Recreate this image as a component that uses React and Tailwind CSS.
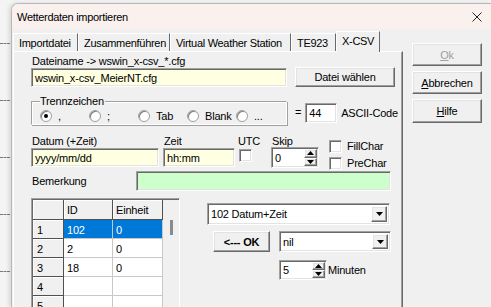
import React from 'react'

const sunken = 'border border-t-[#a0a0a0] border-l-[#a0a0a0] border-b-white border-r-white shadow-[inset_1px_1px_0_#696969,inset_-1px_-1px_0_#e3e3e3]'
const raised = 'border border-t-white border-l-white border-b-[#696969] border-r-[#696969] shadow-[inset_-1px_-1px_0_#a0a0a0,inset_1px_1px_0_#e3e3e3]'

function Arrow({ up }) {
    return (
        <svg width="7" height="4" viewBox="0 0 7 4">
            <path d={up ? 'M0 4 L3.5 0 L7 4 Z' : 'M0 0 L7 0 L3.5 4 Z'} fill="#000" />
        </svg>
    )
}

function Radio({ checked }) {
    return (
        <span className="w-[12px] h-[12px] shrink-0 rounded-full bg-white border border-[#a0a0a0] shadow-[inset_1px_1px_0_#808080] flex items-center justify-center">
            {checked && <span className="w-[4px] h-[4px] rounded-full bg-black" />}
        </span>
    )
}

function Check() {
    return <span className={`block w-[13px] h-[13px] shrink-0 bg-white ${sunken}`} />
}

function Spin({ value, className }) {
    return (
        <div className={`flex items-center bg-white ${sunken} ${className}`}>
            <span className="flex-1 pl-[3px]">{value}</span>
            <div className="flex flex-col w-[14px] h-full py-[1px] pr-[1px]">
                <div className={`flex-1 flex items-center justify-center bg-[#f0f0f0] ${raised}`}><Arrow up /></div>
                <div className={`flex-1 flex items-center justify-center bg-[#f0f0f0] ${raised}`}><Arrow /></div>
            </div>
        </div>
    )
}

function Combo({ value, className }) {
    return (
        <div className={`flex items-center bg-white ${sunken} ${className}`}>
            <span className="flex-1 pl-[3px]">{value}</span>
            <div className={`w-[16px] h-[calc(100%-4px)] mr-[2px] flex items-center justify-center bg-[#f0f0f0] ${raised}`}><Arrow /></div>
        </div>
    )
}

function Button({ children, className }) {
    return (
        <div className={`flex items-center justify-center bg-[#f0f0f0] ${raised} ${className}`}>{children}</div>
    )
}

const tabs = [
    ['Importdatei', 'w-[65px]'],
    ['Zusammenführen', 'w-[92px]'],
    ['Virtual Weather Station', 'w-[121px]'],
    ['TE923', 'w-[45px]'],
]

const rows = [
    ['1', '102', '0', true],
    ['2', '2', '0'],
    ['3', '18', '0'],
    ['4', '', ''],
    ['5', '', ''],
]

export default function App() {
    return (
        <div className="w-[491px] h-[307px] overflow-hidden flex bg-[#f4f4f4] font-['Liberation_Sans',Arial,sans-serif] text-[11px] tracking-[-0.2px] leading-[14px] text-black whitespace-nowrap">
            {/* background behind the dialog */}
            <div className="w-[11px] shrink-0 flex flex-col pt-[43px] gap-[56px]">
                {[0, 1, 2, 3, 4].map((i) => (
                    <div key={i} className="w-[10px] h-0 border-t border-dashed border-[#7a7a7a]" />
                ))}
            </div>

            <div className="flex-1 mt-[3px] flex flex-col rounded-tl-[7px] border-l border-t border-[#b8b8b8] overflow-hidden shadow-[-2px_0_4px_rgba(0,0,0,0.12)]">
                <div className="h-[25px] shrink-0 bg-[#faf0ee] flex items-center justify-between pl-[5px] pr-[9px]">
                    <span className="text-[11px] tracking-[-0.3px]">Wetterdaten importieren</span>
                    <svg width="10" height="10" viewBox="0 0 10 10">
                        <path d="M0.5 0.5 L9.5 9.5 M9.5 0.5 L0.5 9.5" stroke="#222" strokeWidth="1" />
                    </svg>
                </div>

                <div className="flex-1 bg-[#f0f0f0] flex pl-[1px] pt-[2px]">
                    <div className="w-[390px] flex flex-col">
                        {/* tabs */}
                        <div className="h-[20px] flex items-end tracking-[-0.3px]">
                            {tabs.map(([t, w]) => (
                                <div key={t} className={`${w} h-[18px] border-t border-l border-t-white border-l-white border-r border-r-[#696969] flex items-center pl-[5px]`}>
                                    {t}
                                </div>
                            ))}
                            <div className="w-[44px] h-[21px] -mb-px z-10 bg-[#f0f0f0] border-t border-l border-t-white border-l-white border-r border-r-[#696969] flex items-center pl-[5px] pb-[3px]">
                                X-CSV
                            </div>
                        </div>

                        {/* panel */}
                        <div className="flex-1 border-t border-l border-t-white border-l-white border-r border-r-[#696969] shadow-[inset_-1px_0_0_#a0a0a0] pl-[17px]">
                            <div className="mt-[2px] h-[13px] pl-px">Dateiname -&gt; wswin_x-csv_*.cfg</div>
                            <div className="flex h-[20px]">
                                <div className={`w-[256px] h-[19px] mt-px bg-[#ffffe1] flex items-center pl-[3px] ${sunken}`}>wswin_x-csv_MeierNT.cfg</div>
                                <Button className="ml-[8px] w-[100px] h-[20px]">Datei wählen</Button>
                            </div>

                            <div className="flex mt-[9px] h-[29px]">
                                <div className="relative w-[256px] h-[24px] mt-[5px] border border-t-[#a0a0a0] border-l-[#a0a0a0] border-b-white border-r-white shadow-[inset_1px_1px_0_white,1px_1px_0_#a0a0a0]">
                                    <span className="absolute left-[8px] -top-[8px] bg-[#f0f0f0] pr-px">Trennzeichen</span>
                                    <div className="flex items-center pl-[8px] pt-[7px]">
                                        {[[',', true], [';'], ['Tab'], ['Blank'], ['...']].map(([l, c], i) => (
                                            <div key={i} className={`flex items-center gap-[6px] ${i === 4 ? '' : 'w-[49px]'}`}>
                                                <Radio checked={c} />
                                                <span>{l}</span>
                                            </div>
                                        ))}
                                    </div>
                                </div>
                                <span className="ml-[8px] mt-[9px]">=</span>
                                <div className={`ml-[4px] mt-[7px] w-[32px] h-[20px] bg-white flex items-center pl-[3px] ${sunken}`}>44</div>
                                <span className="ml-[4px] mt-[10px]">ASCII-Code</span>
                            </div>

                            <div className="flex mt-[8px] h-[35px]">
                                <div className="w-[128px] flex flex-col">
                                    <span className="h-[15px] pt-px pl-px">Datum (+Zeit)</span>
                                    <div className={`h-[19px] bg-[#ffffe1] flex items-center pl-[3px] ${sunken}`}>yyyy/mm/dd</div>
                                </div>
                                <div className="ml-[4px] w-[72px] flex flex-col">
                                    <span className="h-[15px] pt-px pl-px">Zeit</span>
                                    <div className={`h-[19px] bg-[#ffffe1] flex items-center pl-[3px] ${sunken}`}>hh:mm</div>
                                </div>
                                <div className="ml-[3px] w-[33px] flex flex-col">
                                    <span className="h-[16px] pt-px">UTC</span>
                                    <span className="ml-px"><Check /></span>
                                </div>
                                <div className="w-[48px] flex flex-col">
                                    <span className="h-[14px] pt-px pl-px">Skip</span>
                                    <Spin value="0" className="h-[21px]" />
                                </div>
                                <div className="ml-[10px] flex flex-col gap-[3px] pt-[6px]">
                                    <div className="flex items-center gap-[5px]"><Check /><span>FillChar</span></div>
                                    <div className="flex items-center gap-[5px]"><Check /><span>PreChar</span></div>
                                </div>
                            </div>

                            <div className="flex items-center mt-[3px] h-[20px]">
                                <span className="w-[105px] pl-px">Bemerkung</span>
                                <div className={`w-[255px] h-[20px] bg-[#ccffcc] ${sunken}`} />
                            </div>

                            <div className="flex mt-[7px]">
                                <div className="w-[149px] h-[120px] flex border border-t-[#a0a0a0] border-l-[#a0a0a0] border-r-white shadow-[inset_1px_1px_0_#696969] pt-px pl-px">
                                    <div className="w-[131px] flex flex-col">
                                        <div className="flex h-[20px]">
                                            <div className="w-[31px] bg-[#f0f0f0] border-r border-b border-r-[#505050] border-b-[#505050] shadow-[inset_1px_1px_0_white]" />
                                            <div className="w-[49px] bg-[#f0f0f0] border-r border-b border-r-[#505050] border-b-[#505050] shadow-[inset_1px_1px_0_white] pl-[3px] pt-[3px]">ID</div>
                                            <div className="w-[50px] bg-[#f0f0f0] border-r border-b border-r-[#505050] border-b-[#505050] shadow-[inset_1px_1px_0_white] pl-[3px] pt-[3px]">Einheit</div>
                                        </div>
                                        {rows.map(([n, id, e, sel]) => (
                                            <div key={n} className="flex h-[19px]">
                                                <div className="w-[31px] bg-[#f0f0f0] border-r border-b border-r-[#505050] border-b-[#505050] shadow-[inset_1px_1px_0_white] pl-[4px] pt-[3px]">{n}</div>
                                                <div className={`w-[49px] border-r border-b border-[#c8c8c8] pl-[3px] pt-[3px] ${sel ? 'bg-[#0078d7] text-white' : 'bg-white'}`}>{id}</div>
                                                <div className={`w-[50px] border-r border-b border-[#c8c8c8] pl-[3px] pt-[3px] ${sel ? 'bg-[#0078d7] text-white' : 'bg-white'}`}>{e}</div>
                                            </div>
                                        ))}
                                    </div>
                                    <div className="flex-1 bg-[#f0f0f0] flex justify-center pt-[20px]">
                                        <div className="w-[3px] h-[15px] bg-[#8a8a8a]" />
                                    </div>
                                </div>

                                <div className="ml-[27px] flex flex-col">
                                    <Combo value="102 Datum+Zeit" className="mt-[5px] w-[183px] h-[22px]" />
                                    <div className="flex mt-[6px]">
                                        <Button className="ml-[6px] w-[57px] h-[21px] font-bold">&lt;--- OK</Button>
                                        <Combo value="nil" className="ml-[9px] w-[112px] h-[21px]" />
                                    </div>
                                    <div className="flex items-center mt-[8px] ml-[72px]">
                                        <Spin value="5" className="w-[48px] h-[20px]" />
                                        <span className="ml-px">Minuten</span>
                                    </div>
                                </div>
                            </div>
                        </div>
                    </div>

                    {/* dialog buttons */}
                    <div className="ml-[9px] mt-[12px] flex flex-col gap-[5px]">
                        <Button className="w-[70px] h-[23px] text-[#a0a0a0]"><span className="underline">O</span>k</Button>
                        <Button className="w-[70px] h-[23px]"><span className="underline">A</span>bbrechen</Button>
                        <Button className="w-[70px] h-[24px]"><span className="underline">H</span>ilfe</Button>
                    </div>
                </div>
            </div>
        </div>
    )
}
